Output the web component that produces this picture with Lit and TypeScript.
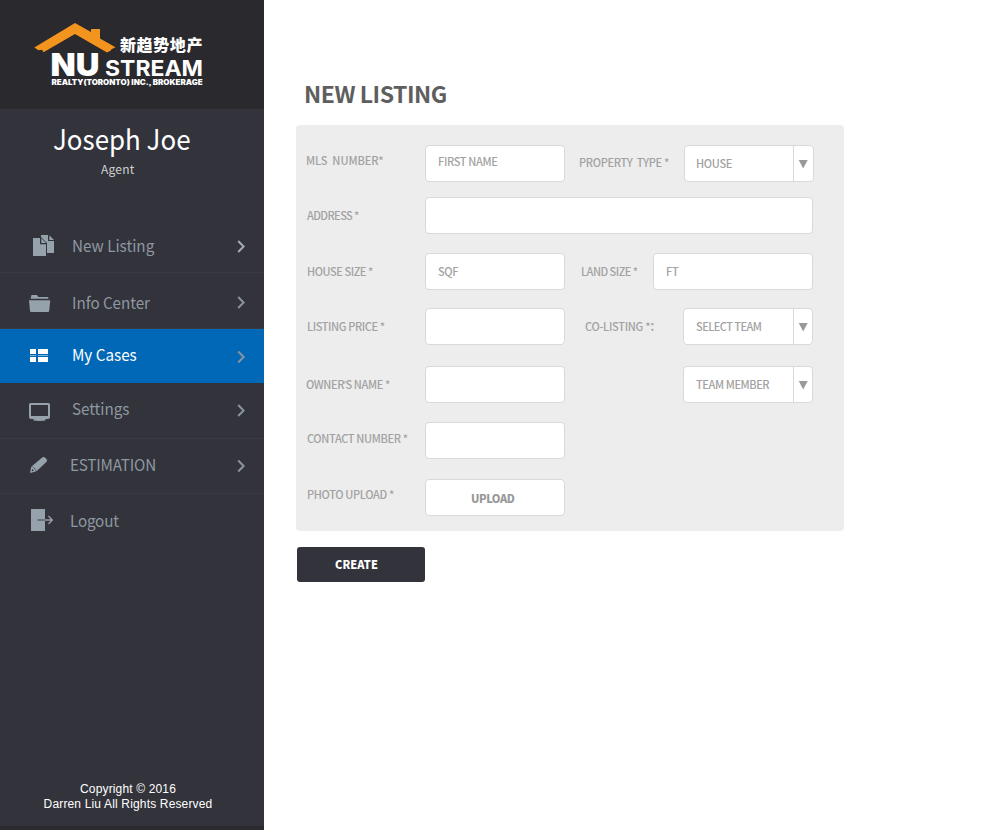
import { LitElement, html, svg, css } from "lit";
import { customElement } from "lit/decorators.js";

const t = (text: unknown, ls = 0) => html`<span class="t" style="letter-spacing:${ls}px">${text}</span>`;

const chevron = svg`<path d="M1.2 1 L6.6 6.5 L1.2 12" fill="none" stroke="currentColor" stroke-width="2"/>`;

const menu = [
  { label: "New Listing", ls: 0, top: 218, h: 55, dx: 72, mid: 245, cy: 246.5, bright: true,
    icon: svg`<path d="M41 235H48V241H54V253H47V243L41 237Z"/><path d="M49.3 235.2L54 240H49.3Z"/>
      <path d="M33 238H40V244.2H46V256H33Z"/><path d="M41.3 238.3L46 243H41.3Z"/>` },
  { label: "Info Center", ls: -0.05, top: 273, h: 56, dx: 71.5, mid: 302, cy: 302.5,
    icon: svg`<path d="M31.5 295H37L38.3 297H47.5Q48.5 297 48.6 298.8H30.6Z"/><path d="M29 300.2H50.2L49.2 311Q49 312 48 312H31.2Q30.2 312 30 311Z"/>` },
  { label: "My Cases", ls: 0, top: 329, h: 54, dx: 72, mid: 354, cy: 357, active: true,
    icon: svg`<path d="M30 349H36V354H30ZM38 349H48V354H38ZM30 357H36V362H30ZM38 357H48V362H38Z"/><path opacity=".5" d="M30 355H36V356H30ZM38 355H48V356H38Z"/>` },
  { label: "Settings", ls: -0.05, top: 383, h: 56, dx: 71.5, mid: 408, cy: 410.5,
    icon: svg`<path fill-rule="evenodd" d="M30.5 403H48.5Q50 403 50 404.5V417Q50 419 48 419H31Q29 419 29 417V404.5Q29 403 30.5 403ZM31 405V416H48V405Z"/><path d="M34 419H45L46 420.3Q44 421 39.500 421T33 420.3Z"/>` },
  { label: "ESTIMATION", ls: -0.2, top: 439, h: 55, dx: 70, mid: 464, cy: 466,
    icon: svg`<path d="M31.800 466.200L42.200 457.600Q43.700 456.500 45 457.600L46.600 459.200Q47.600 460.500 46.600 461.700L36.500 471.300Q35.300 467.600 31.800 466.200Z"/><path fill-rule="evenodd" d="M31.200 466.600Q35 468 36 471.600L30 473ZM32.100 469L31.700 471.300L34 470.800Z"/>` },
  { label: "Logout", ls: -0.2, top: 494, h: 55, dx: 70, mid: 520, cy: 0,
    icon: svg`<path d="M31 509H45V531H31Z"/><path d="M37.500 520H45" stroke="#5d636b" stroke-width="1.600"/><path d="M45 520H52M48.500 516L52.300 520L48.500 524" fill="none" stroke="currentColor" stroke-width="1.300"/>` },
];

@customElement("app-root")
export class AppRoot extends LitElement {
  static styles = css`
    :host { display: flex; width: 1000px; height: 830px; background: #fff; font-family: "Noto Sans CJK SC", sans-serif; overflow: hidden; }
    .t { white-space: pre; }
    .side { width: 264px; height: 830px; background: #33333b; display: flex; flex-direction: column; box-sizing: border-box; border-bottom: 4px solid #2a2a30; }
    .logo { height: 109px; background: #29292e; }
    .logo svg { display: block; }
    .profile { height: 109px; color: #fff; display: flex; flex-direction: column; }
    .name { font-size: 28px; line-height: 40px; padding: 9px 0 0 53px; }
    .name .t { display: inline-block; transform: scaleX(0.925); transform-origin: 0 0; }
    .role { font-size: 12px; line-height: 16px; padding: 3px 0 0 101px; color: #cfd0d2; }
    .item { display: flex; box-sizing: border-box; border-bottom: 1px solid #3a3a42; color: #8d98a1; font-size: 16px; }
    .item.active { background: #0068b7; color: #fff; border: 0; }
    .item:nth-last-child(2) { border: 0; }
    .item svg { display: block; flex: none; fill: currentColor; }
    .item .ico { color: #96a2ab; }
    .item.active .ico { color: #fff; }
    .item .text { width: 177px; line-height: 24px; box-sizing: border-box; }
    .item .text .t { display: inline-block; transform: scaleX(0.952); transform-origin: 0 0; }
    .item .arr { color: #89949d; }
    .item.bright .arr { color: #a3adb5; }
    .copy { margin-top: auto; padding: 0 8px 14px 0; text-align: center; color: #fff; font: 12px/15px "Liberation Sans", sans-serif; }
    .copy div { height: 15px; }
    .main { flex: 1; padding: 75px 0 0 32px; }
    h1 { margin: 0; padding-left: 8px; font-size: 23px; line-height: 36px; height: 50px; box-sizing: border-box; color: #5e5e5e; font-weight: 700; }
    .panel { width: 548px; height: 406px; box-sizing: border-box; padding-top: 20px; background: #ededed; border-radius: 4px; color: #a2a2a2; font-size: 11px; font-weight: 500; line-height: 16px; }
    .row { display: flex; height: 37px; }
    .label { box-sizing: border-box; flex: none; }
    .colon { font-size: 14px; line-height: 10px; }
    .quote { font-family: "Open Sans", sans-serif; line-height: 10px; }
    .box { box-sizing: border-box; height: 37px; background: #fff; border: 1px solid #d9d9d9; border-radius: 4px; padding: 9px 0 0 12px; }
    .box.raised { padding-top: 7px; }
    .box.select { display: flex; padding: 0; }
    .select .val { flex: 1; padding-top: 9px; }
    .select .dd { border-left: 1px solid #d9d9d9; }
    .dd svg { display: block; }
    .box.upload { font-weight: 900; padding: 10px 0 0 45px; color: #999; }
    .create { margin: 16px 0 0 1px; width: 128px; height: 35px; border-radius: 3px; background: #33333b; color: #fff; font-size: 11px; font-weight: 900; line-height: 16px; padding: 9px 0 0 38px; box-sizing: border-box; }
  `;

  field(w: number, v = "", ls = 0, raised = false) {
    return html`<div class="box ${raised ? "raised" : ""}" style="width:${w}px">${v ? t(v, ls) : ""}</div>`;
  }
  select(v: string, ls: number, pad: number, dd: number) {
    return html`<div class="box select" style="width:130px"><div class="val" style="padding-left:${pad}px">${t(v, ls)}</div><div class="dd"><svg width=${dd} height="35"><path d="M4.700 14H13.700L9.200 22.500Z" fill="#999"/></svg></div></div>`;
  }
  label(w: number, x: number, y: number, v: unknown, ls = 0, extra: unknown = "") {
    return html`<div class="label" style="width:${w}px;padding:${y}px 0 0 ${x}px">${t(v, ls)}${extra}</div>`;
  }
  row(gap: number, ...c: unknown[]) { return html`<div class="row" style="margin-top:${gap}px">${c}</div>`; }

  render() {
    return html`
      <div class="side">
        <div class="logo"><svg width="264" height="109">
          <path fill="#f3941e" d="M75 23L91 32V29H100V38.500L115.500 47.300L111.500 49.300L110.500 50.800L107 52.500L75 34L43.500 52.300L42 49.800L38.500 50.300L34.300 47.500Z"/>
          <g fill="#fff">
            <text x="120" y="51" font-family="Noto Sans CJK SC" font-weight="900" font-size="16" textLength="82.500">新趋势地产</text>
            <text x="50.500" y="76.400" font-family="Inter" font-weight="900" font-size="31.500" textLength="49" lengthAdjust="spacingAndGlyphs">NU</text>
            <text x="105" y="76.400" font-family="Inter" font-weight="700" font-size="22" textLength="98" lengthAdjust="spacingAndGlyphs">STREAM</text>
            <text x="51.500" y="84.700" font-family="Inter" font-weight="900" font-size="7.500" textLength="151" lengthAdjust="spacingAndGlyphs">REALTY(TORONTO) INC., BROKERAGE</text>
          </g></svg></div>
        <div class="profile"><div class="name">${t("Joseph Joe")}</div><div class="role">${t("Agent", 0.2)}</div></div>
        ${menu.map((m) => html`<div class="item ${m.active ? "active" : ""} ${m.bright ? "bright" : ""}" style="height:${m.h}px">
          <svg class="ico" width="60" height=${m.h} viewBox="0 ${m.top} 60 ${m.h}">${m.icon}</svg>
          <div class="text" style="padding:${m.mid - 12 - m.top}px 0 0 ${m.dx - 60}px">${t(m.label, m.ls)}</div>
          ${m.cy ? html`<svg class="arr" width="10" height=${m.h} viewBox="0 ${m.top} 10 ${m.h}"><g transform="translate(0 ${m.cy - 6.5})">${chevron}</g></svg>` : ""}
        </div>`)}
        <div class="copy"><div>${t("Copyright © 2016", 0.15)}</div><div>${t("Darren Liu All Rights Reserved", 0.16)}</div></div>
      </div>
      <div class="main">
        <h1>${t("NEW LISTING", -0.48)}</h1>
        <div class="panel">
          ${this.row(0, this.label(129, 10, 7, "MLS  NUMBER*", -0.05), this.field(140, "FIRST NAME", -0.35, true), this.label(119, 14, 9, "PROPERTY  TYPE *", -0.32), this.select("HOUSE", -0.3, 11, 19))}
          ${this.row(15, this.label(129, 11, 10, "ADDRESS *", -0.58), this.field(388))}
          ${this.row(19, this.label(129, 11, 10, "HOUSE SIZE *", -0.45), this.field(140, "SQF", -0.4), this.label(88, 16, 10, "LAND SIZE *", -0.52), this.field(160, "FT", -0.3))}
          ${this.row(18, this.label(129, 11, 10, "LISTING PRICE *", -0.4), this.field(140), this.label(118, 20, 10, "CO-LISTING *", -0.28, html`<span class="colon">:</span>`), this.select("SELECT TEAM", -0.55, 12, 18))}
          ${this.row(21, this.label(129, 10, 10, html`OWNER<span class="quote">’</span>S NAME *`, -0.4), this.field(140), this.label(118, 0, 0, ""), this.select("TEAM MEMBER", -0.42, 12, 18))}
          ${this.row(19, this.label(129, 11, 8, "CONTACT NUMBER *", -0.35), this.field(140))}
          ${this.row(20, this.label(129, 11, 7, "PHOTO UPLOAD *", -0.35), html`<div class="box upload" style="width:140px">${t("UPLOAD", -0.4)}</div>`)}
        </div>
        <div class="create">${t("CREATE", 0.1)}</div>
      </div>`;
  }
}
